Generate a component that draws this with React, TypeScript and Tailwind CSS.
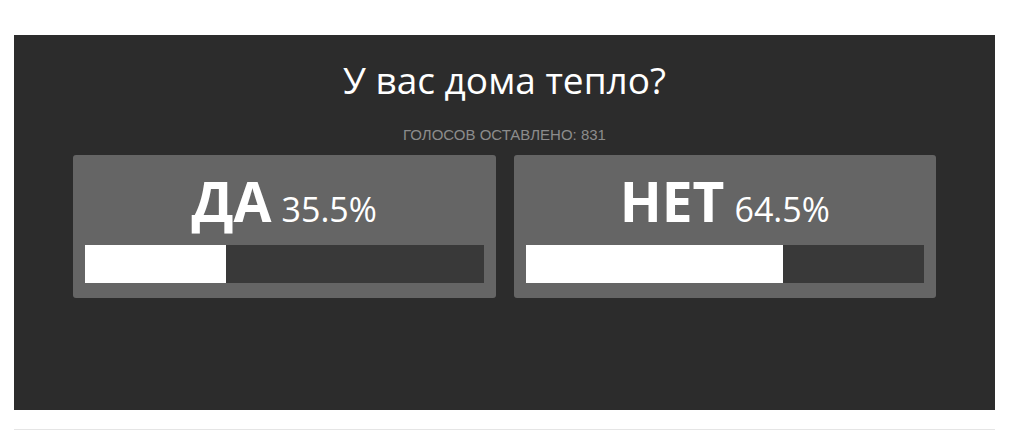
const options = [
    { label: "ДА", percent: 35.5 },
    { label: "НЕТ", percent: 64.5 },
]

const PollOption = ({ label, percent }: { label: string, percent: number }) => {
    return (
        <div className="bg-[#656565] rounded-[3px] pt-[18px] px-[12px] pb-[15px]">
            <div className="h-[56px] flex justify-center items-baseline text-white whitespace-nowrap">
                <span className="text-[55px] leading-[56px] font-bold">{label}</span>
                <span className="text-[34px] leading-none ml-[10px]">{percent}%</span>
            </div>
            <div className="mt-[16px] h-[38px] bg-[#393939]">
                <div className="h-full bg-white" style={{ width: `${percent}%` }} />
            </div>
        </div>
    )
}

const App = () => {
    return (
        <div className="w-full h-[430px] bg-white pl-[14px] pr-[20px] pt-[35px] overflow-hidden" style={{ fontFamily: '"Open Sans", sans-serif' }}>
            <div className="h-[375px] bg-[#2c2c2c] pt-[20px]">
                <h1 className="text-center text-white text-[37px] leading-[50px]">У вас дома тепло?</h1>
                <p className="mt-[21px] text-center text-[15px] leading-[17px] text-[#8c8c8c] uppercase" style={{ fontFamily: '"Liberation Sans", Arial, sans-serif' }}>
                    Голосов оставлено: 831
                </p>
                <div className="mt-[12px] px-[59px] grid grid-cols-2 gap-[18px]">
                    {options.map((option, index) => (
                        <PollOption label={option.label} percent={option.percent} key={index} />
                    ))}
                </div>
            </div>
            <div className="mt-[19px] border-t border-[#e5e5e5]" />
        </div>
    )
}

export default App
